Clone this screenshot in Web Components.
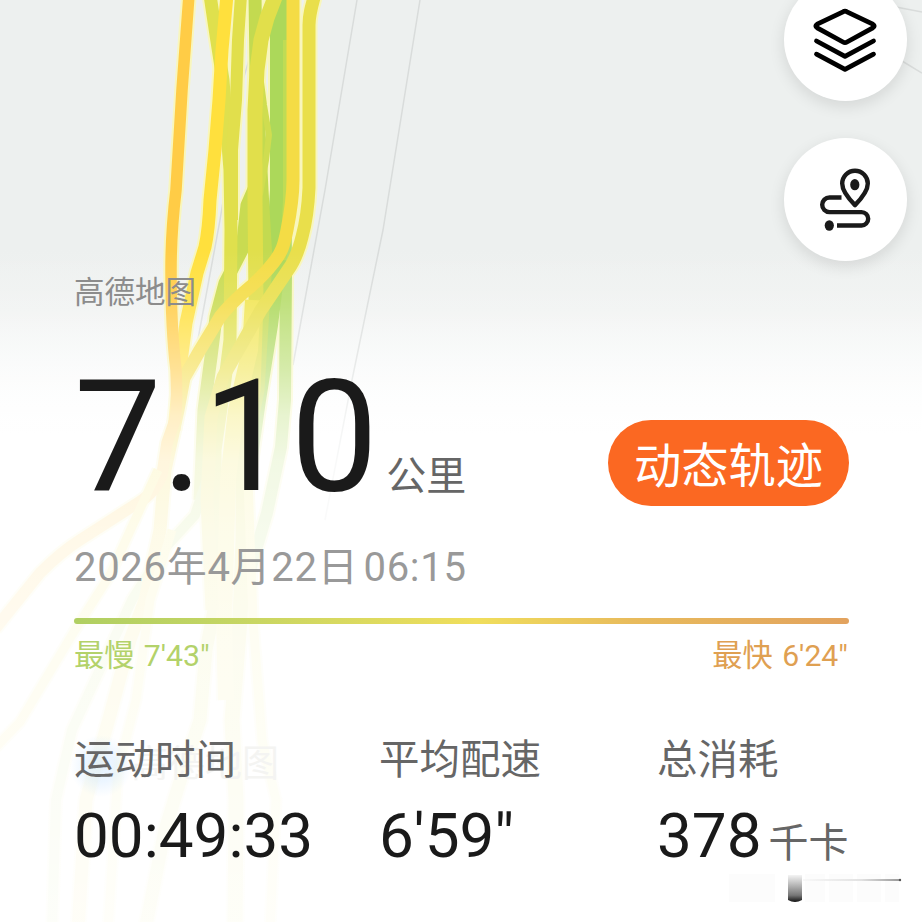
<!DOCTYPE html>
<html lang="zh-CN">
<head>
<meta charset="UTF-8">
<title>跑步记录</title>
<style>
  html, body {
    margin: 0;
    background: #ffffff;
  }
  body {
    font-family: Roboto, "Noto Sans CJK SC", sans-serif;
    color: #1a1a1a;
  }
</style>
</head>
<body>
<run-summary></run-summary>

<script>
(function (customElements) {

    const define = (name, html) => {
        const template = document.createElement('template');
        template.innerHTML = html;
        customElements.define(name, class extends HTMLElement {
            constructor() {
                super();
                this.attachShadow({ mode: 'open' });
                this.shadowRoot.appendChild(template.content.cloneNode(true));
            }
        });
    };

    // Track segments: [colour, width, path]. Later entries are drawn on top.
    const TRACKS = [
        ['#b6dc6a', 12, 'M285 100 L286 270 L285 400 L281 447 L267 513 L250 570'],
        ['#acd85a', 20, 'M280 -5 L280 190 L276 260 L268 325 L256 400 L246 470'],
        ['#bfdc55', 6, 'M286 40 L286 200 L283 260'],
        ['#c3da50', 13, 'M255 -5 L256 70 L262 190 L266 260 L258 390 L240 480'],
        ['#c9db51', 13, 'M258 180 L247 205 L242 250 L225 283 L216 317 L211 357 L204 410 L200 500'],
        ['#c6e070', 10, 'M210 470 L195 515 L165 548 L132 600 L102 665 L72 730 L56 800 L52 930'],
        ['#dfe04d', 13, 'M210 -5 L216 35 L223 80 L226 120 L230 170 L231 230 L230 340 L225 380 L215 450 L216 600 L206 650 L200 720 L185 765 L165 830 L145 930'],
        ['#e1df4c', 12, 'M241 -5 L238 40 L236 100 L232 150 L232 220'],
        ['#cfdd50', 6, 'M260 75 L264 105 L269 135 L266 160 L260 195'],
        ['#e1df4b', 15, 'M277 -8 L267 18 L261 40 L257 70 L255 110 L255 200 L256 300 L253 390 L243 450 L243 540 L240 620 L232 720 L236 800 L235 930'],
        ['#f1e552', 16, 'M253 300 L250 350 L236 410 L228 480 L224 620 L226 700'],
        ['#ffe03d', 13, 'M227 -5 L222 50 L219 100 L215 150 L210 200 C209 225 207 238 205 247 L197 273 L186 323 L180 370 L174 430'],
        ['#f4dc45', 13, 'M293 -5 L293 180 C293 195 290 215 287 230 C284 245 282 252 274 262 C264 275 253 285 243 293 C233 302 226 309 220 317 L200 350 L184 378 L178 410 L165 470 L160 530 L145 600 L130 640 L110 715 L86 800 L78 930'],
        ['#e9df4b', 13, 'M315 -6 C311 8 309 15 309 25 L309 188 C308 210 305 226 302 237 C298 253 294 262 288 270 L261 310 L240 347 L223 377 L211 417 L207 500 L212 610'],
        ['#ffcc46', 11.5, 'M189 -5 L182 90 L176 190 C173 215 171 240 171 270 C171 310 173 345 176 370 C177 395 177 410 175 420 L167 443 L162 475 C156 490 147 498 133 506 L80 540 C64 550 50 563 40 573 L-5 629'],
        ['#f8e65a', 9, 'M158 470 L135 520 L110 575 L75 630 L45 680 L20 722 L-5 748'],
        ['#f5ec6b', 9, 'M172 530 L150 600 L136 700 L118 770 L108 930'],
        ['#f5ec6b', 9, 'M248 480 L253 620 L262 740 L276 800 L270 930']
    ];

    const strokes = (extra, colour) => TRACKS.map(([c, w, d]) =>
        `<path d="${d}" stroke="${colour || c}" stroke-width="${w + extra}"/>`).join('');

    define('track-map', `
  <style>
    :host { display: block; width: 922px; height: 922px; background: #edf0ef; }
    svg { display: block; }
  </style>
  <svg width="922" height="922" viewBox="0 0 922 922" fill="none">
    <defs>
      <linearGradient id="fade" x1="0" y1="0" x2="0" y2="1">
        <stop offset=".27" stop-color="#fff" stop-opacity="0"/>
        <stop offset=".325" stop-color="#fff" stop-opacity=".12"/>
        <stop offset=".36" stop-color="#fff" stop-opacity=".27"/>
        <stop offset=".4" stop-color="#fff" stop-opacity=".43"/>
        <stop offset=".45" stop-color="#fff" stop-opacity=".68"/>
        <stop offset=".5" stop-color="#fff" stop-opacity=".82"/>
        <stop offset=".58" stop-color="#fff" stop-opacity=".88"/>
        <stop offset=".7" stop-color="#fff" stop-opacity=".92"/>
        <stop offset="1" stop-color="#fff" stop-opacity=".96"/>
      </linearGradient>
      <linearGradient id="ground" x1="0" y1="0" x2="0" y2="1">
        <stop offset=".27" stop-color="#edf0ef"/>
        <stop offset=".34" stop-color="#f1f3f2"/>
        <stop offset=".42" stop-color="#fafbfb"/>
        <stop offset=".47" stop-color="#fff"/>
      </linearGradient>
      <radialGradient id="logo">
        <stop offset="0" stop-color="#a8d4ff" stop-opacity=".3"/>
        <stop offset=".5" stop-color="#a8d4ff" stop-opacity=".22"/>
        <stop offset="1" stop-color="#a8d4ff" stop-opacity="0"/>
      </radialGradient>
    </defs>
    <rect width="922" height="922" fill="url(#ground)"/>
    <g stroke="#d9dcdb" stroke-width="1.5">
      <path d="M357 0 L325 190 L293 365"/>
      <path d="M420 0 L383 230 L352 380 L325 520"/>
      <path d="M309 0 L298 45 M252 50 L243 80 L220 220 L196 350"/>
      <path d="M896 7 L922 12 M902 61 L922 73"/>
    </g>
    <g stroke-linejoin="round">
      ${strokes(4, '#f8f6bd')}
      ${strokes(0)}
    </g>
    <rect width="922" height="922" fill="url(#fade)"/>
    <circle cx="101" cy="766" r="31" fill="url(#logo)"/>
    <text x="131" y="777" font-size="37" fill="#f4f4f2">高德地图</text>
  </svg>`);

    define('round-button', `
  <style>
    :host {
      display: flex;
      align-items: center;
      justify-content: center;
      width: 123px;
      height: 123px;
      border-radius: 50%;
      background: #ffffff;
      box-shadow: 0 5px 16px rgba(0, 0, 0, .11);
    }
  </style>
  <slot></slot>`);

    define('pill-button', `
  <style>
    :host {
      display: flex;
      align-items: center;
      justify-content: center;
      width: 241px;
      height: 86px;
      border-radius: 43px;
      background: #fb6822;
      color: #ffffff;
      font-size: 47.3px;
      line-height: 1;
    }
    span { padding-top: 9px; }
  </style>
  <span><slot></slot></span>`);

    define('distance-value', `
  <style>
    :host { display: flex; align-items: baseline; font-size: 156px; line-height: 156px; }
    .unit { margin-left: 8px; font-size: 40px; line-height: 40px; color: #666666; }
  </style>
  <slot></slot><span class="unit"><slot name="unit"></slot></span>`);

    define('pace-scale', `
  <style>
    :host { display: block; font-size: 30.2px; line-height: 36px; word-spacing: 2px; }
    .bar {
      height: 6px;
      border-radius: 3px;
      background: linear-gradient(90deg, #b0cf62 0%, #c4d563 20%, #f0de5c 52%, #e8bb5c 72%, #e2a25e 100%);
    }
    .ends { display: flex; justify-content: space-between; margin-top: 14px; padding-right: 1px; }
    .slow { color: #b3d26a; }
    .fast { color: #dfa052; }
  </style>
  <div class="bar"></div>
  <div class="ends">
    <span class="slow"><slot name="slow"></slot></span>
    <span class="fast"><slot name="fast"></slot></span>
  </div>`);

    define('stat-item', `
  <style>
    :host { display: block; white-space: nowrap; }
    .label { font-size: 40.5px; line-height: 48px; color: #666666; }
    .value { display: flex; align-items: baseline; margin-top: 16px; font-size: 62px; line-height: 72px; }
    ::slotted([slot="unit"]) { margin-left: 7px; font-size: 40px; line-height: 40px; color: #666666; }
  </style>
  <div class="label"><slot name="label"></slot></div>
  <div class="value"><slot></slot><slot name="unit"></slot></div>`);

    // Thin rule and stub at the lower right corner.
    define('corner-mark', `
  <style>
    :host { display: block; width: 176px; height: 32px; }
    svg { display: block; }
  </style>
  <svg width="176" height="32" viewBox="0 0 176 32">
    <defs>
      <linearGradient id="stub" x1="0" y1="0" x2="0" y2="1">
        <stop offset="0" stop-color="#f4f4f4"/>
        <stop offset=".35" stop-color="#bbb"/>
        <stop offset=".75" stop-color="#777"/>
        <stop offset="1" stop-color="#111"/>
      </linearGradient>
      <linearGradient id="rule">
        <stop offset="0" stop-color="#f8f8f8"/>
        <stop offset=".6" stop-color="#e2e2e2"/>
        <stop offset="1" stop-color="#999"/>
      </linearGradient>
    </defs>
    <g fill="#fcfcfc">
      <rect x="0" y="2" width="46" height="28"/>
      <rect x="76" y="2" width="20" height="28"/>
      <rect x="100" y="2" width="24" height="28"/>
      <rect x="128" y="2" width="24" height="28"/>
      <rect x="156" y="2" width="14" height="28"/>
    </g>
    <rect x="74" y="7" width="97" height="2" fill="url(#rule)"/>
    <circle cx="171" cy="8" r="1.2" fill="#555"/>
    <path d="M59 3 H73 V28 Q66 32 59 28 Z" fill="url(#stub)"/>
  </svg>`);

    define('run-summary', `
  <style>
    :host { display: grid; position: relative; width: 922px; height: 922px; overflow: hidden; }
    track-map, .panel { grid-area: 1 / 1; }
    .panel { position: relative; box-sizing: border-box; padding: 273px 73px 0 74px; }
    .source { height: 40px; font-size: 30.5px; line-height: 40px; color: #8c8c8c; }
    .headline { display: flex; justify-content: space-between; margin-top: 46px; height: 156px; }
    .headline pill-button { margin-top: 61px; }
    .date {
      margin-top: 29px;
      font-size: 40px;
      line-height: 48px;
      letter-spacing: .7px;
      word-spacing: -5.5px;
      color: #999999;
    }
    pace-scale { margin-top: 26px; }
    .stats { display: grid; grid-template-columns: 305px 278px auto; margin-top: 62px; }
    .tools {
      position: absolute;
      top: -22px;
      right: 15px;
      display: flex;
      flex-direction: column;
      gap: 37px;
    }
    corner-mark { position: absolute; right: 17px; bottom: 18px; }
  </style>
  <track-map></track-map>
  <div class="panel">
    <div class="source">高德地图</div>
    <div class="headline">
      <distance-value>7.10<span slot="unit">公里</span></distance-value>
      <pill-button>动态轨迹</pill-button>
    </div>
    <div class="date">2026年4月22日 06:15</div>
    <pace-scale>
      <span slot="slow">最慢 7'43"</span>
      <span slot="fast">最快 6'24"</span>
    </pace-scale>
    <div class="stats">
      <stat-item><span slot="label">运动时间</span>00:49:33</stat-item>
      <stat-item><span slot="label">平均配速</span>6'59"</stat-item>
      <stat-item><span slot="label">总消耗</span>378<span slot="unit">千卡</span></stat-item>
    </div>
  </div>
  <div class="tools">
    <round-button>
      <svg width="70" height="70" viewBox="811 5 70 70" fill="none" stroke="#000" stroke-width="4.8" stroke-linecap="round" stroke-linejoin="round">
        <path d="M843 11.8 Q845 10.6 847 11.8 L872.8 24.2 Q875.6 26 872.8 27.8 L847 42 Q845 43.2 843 42 L817.2 27.8 Q814.4 26 817.2 24.2 Z"/>
        <path d="M816.5 41 L845 56.3 L873.5 41"/>
        <path d="M816.5 54.2 L845 69.3 L873.5 54.2"/>
      </svg>
    </round-button>
    <round-button>
      <svg width="70" height="70" viewBox="811 164.5 70 70" fill="none" stroke="#1a1a1a" stroke-width="4.4" stroke-linejoin="round">
        <path d="M855 204.6 C849 198.5 842.2 191 842.2 183 A12.8 12.8 0 0 1 867.8 183 C867.8 191 861 198.5 855 204.6 Z"/>
        <ellipse cx="854.8" cy="184.2" rx="4.6" ry="5.6" fill="#1a1a1a" stroke="none"/>
        <path d="M841.5 197 H829.5 A7.3 7.3 0 0 0 829.5 211.6 H861.5 A6.7 6.7 0 0 1 861.5 225 H837"/>
        <ellipse cx="829.3" cy="225" rx="4.6" ry="5.2" fill="#1a1a1a" stroke="none"/>
      </svg>
    </round-button>
  </div>
  <corner-mark></corner-mark>`);

})(window.customElements);
</script>
</body>
</html>
